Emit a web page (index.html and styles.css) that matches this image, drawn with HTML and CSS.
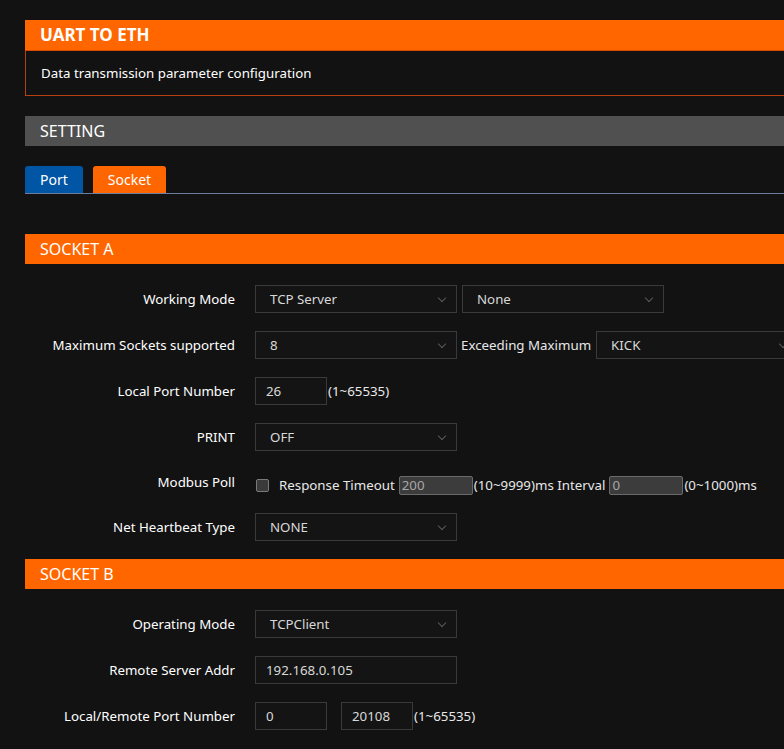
FILE: index.html
```html
<!DOCTYPE html>
<html>
<head>
<meta charset="utf-8">
<link rel="stylesheet" href="styles.css">
</head>
<body>
<div class="page">
  <section class="panel">
    <div class="panel-head">UART TO ETH</div>
    <div class="panel-body">Data transmission parameter configuration</div>
  </section>

  <div class="bar bar-grey">SETTING</div>

  <div class="tabs">
    <span class="tab tab-port">Port</span>
    <span class="tab tab-socket">Socket</span>
  </div>

  <div class="bar bar-orange">SOCKET A</div>
  <div class="form">
    <div class="row">
      <label class="lbl">Working Mode</label>
      <div class="ctrls">
        <div class="select">TCP Server</div>
        <div class="select select-gap">None</div>
      </div>
    </div>
    <div class="row">
      <label class="lbl">Maximum Sockets supported</label>
      <div class="ctrls">
        <div class="select">8</div>
        <span class="txt txt-l">Exceeding Maximum</span>
        <div class="select select-kick">KICK</div>
      </div>
    </div>
    <div class="row">
      <label class="lbl">Local Port Number</label>
      <div class="ctrls">
        <div class="input input-sm">26</div>
        <span class="txt">(1~65535)</span>
      </div>
    </div>
    <div class="row">
      <label class="lbl">PRINT</label>
      <div class="ctrls">
        <div class="select">OFF</div>
      </div>
    </div>
    <div class="row row-mb">
      <label class="lbl">Modbus Poll</label>
      <div class="ctrls">
        <span class="check"></span>
        <span class="txt txt-resp">Response Timeout</span>
        <div class="mini">200</div>
        <span class="txt">(10~9999)ms Interval</span>
        <div class="mini mini-2">0</div>
        <span class="txt">(0~1000)ms</span>
      </div>
    </div>
    <div class="row">
      <label class="lbl">Net Heartbeat Type</label>
      <div class="ctrls">
        <div class="select">NONE</div>
      </div>
    </div>
  </div>

  <div class="bar bar-orange bar-b">SOCKET B</div>
  <div class="form">
    <div class="row">
      <label class="lbl">Operating Mode</label>
      <div class="ctrls">
        <div class="select">TCPClient</div>
      </div>
    </div>
    <div class="row">
      <label class="lbl">Remote Server Addr</label>
      <div class="ctrls">
        <div class="input input-lg">192.168.0.105</div>
      </div>
    </div>
    <div class="row">
      <label class="lbl">Local/Remote Port Number</label>
      <div class="ctrls">
        <div class="input input-sm">0</div>
        <div class="input input-sm input-gap">20108</div>
        <span class="txt">(1~65535)</span>
      </div>
    </div>
  </div>
</div>
</body>
</html>
```

FILE: styles.css
```css
html, body {
  margin: 0;
  padding: 0;
  background: #121212;
  overflow: hidden;
}
body {
  font-family: "Noto Sans", "Open Sans", sans-serif;
  font-size: 13.3px;
  color: #ffffff;
}
.page {
  width: 1000px;
  padding: 20px 0 0 25px;
}
.panel-head {
  height: 30px;
  line-height: 30px;
  background: #ff6600;
  border-bottom: 1px solid #d84a00;
  padding-left: 15px;
  font-size: 17px;
  font-weight: 700;
}
.panel-body {
  height: 44px;
  line-height: 44px;
  border-left: 1px solid #b8400f;
  border-bottom: 1px solid #b8400f;
  padding-left: 15px;
}
.bar {
  height: 30px;
  line-height: 30px;
  padding-left: 15px;
  font-size: 16px;
}
.bar-grey {
  margin-top: 20px;
  background: #505050;
}
.tabs {
  margin-top: 20px;
  height: 27px;
  border-bottom: 1px solid #6c7c9c;
  display: flex;
  gap: 10px;
}
.tab {
  height: 27px;
  line-height: 27px;
  padding: 0 15px;
  border-radius: 3px 3px 0 0;
  font-size: 14px;
}
.tab-port { background: #0055a5; }
.tab-socket { background: #ff6600; }
.bar-orange {
  margin-top: 40px;
  background: #ff6600;
}
.bar-b { margin-top: 18px; }
.form {
  padding-top: 21px;
}
.row {
  display: flex;
  align-items: center;
  height: 28px;
  margin-bottom: 18px;
}
.row-mb { height: 26px; }
.lbl {
  width: 210px;
  text-align: right;
  padding-right: 20px;
  flex-shrink: 0;
}
.ctrls {
  display: flex;
  align-items: center;
  height: 100%;
  box-sizing: border-box;
}
.row-mb .ctrls { padding-top: 6px; }
.select, .input {
  box-sizing: border-box;
  height: 28px;
  line-height: 26px;
  border: 1px solid #3a3a3a;
  background: #141414;
  color: #d8d8d8;
  position: relative;
}
.select {
  width: 202px;
  padding-left: 14px;
}
.select::after {
  content: "";
  position: absolute;
  right: 11px;
  top: 9px;
  width: 5px;
  height: 5px;
  border-right: 1.5px solid #5a5a5a;
  border-bottom: 1.5px solid #5a5a5a;
  transform: rotate(45deg);
}
.select-gap { margin-left: 5px; }
.select-kick { margin-left: 5px; }
.input {
  padding-left: 10px;
}
.input-sm { width: 72px; }
.input-lg { width: 202px; }
.input-gap { margin-left: 14px; }
.txt {
  color: #e8e8e8;
  margin-left: 1px;
  white-space: nowrap;
}
.txt-l { margin-left: 4px; }
.check {
  box-sizing: border-box;
  width: 13px;
  height: 13px;
  border: 1px solid #7a7a7a;
  border-radius: 2px;
  background: #3a3a3a;
  margin-left: 1px;
}
.txt-resp { margin-left: 10px; margin-right: 4px; }
.mini {
  box-sizing: border-box;
  width: 74px;
  height: 19px;
  line-height: 17px;
  border: 1px solid #6a6a6a;
  border-radius: 2px;
  background: #3c3c3c;
  color: #a8a8a8;
  padding-left: 2px;
}
.mini-2 { margin-left: 4px; }
```
